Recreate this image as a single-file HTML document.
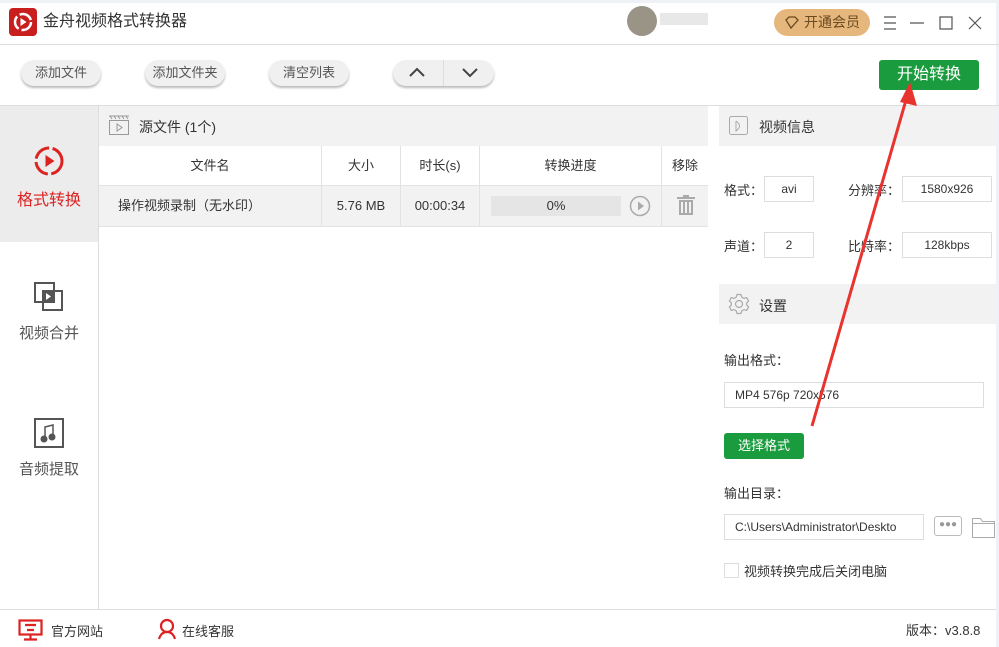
<!DOCTYPE html>
<html><head><meta charset="utf-8"><style>
*{margin:0;padding:0;box-sizing:border-box}
body{width:999px;height:647px;position:relative;background:#fff;font-family:"Liberation Sans","Noto Sans CJK SC",sans-serif;color:#333;overflow:hidden;font-size:13px}
.a{position:absolute}
.btn{position:absolute;height:26px;border-radius:13px;background:#f0f0f0;box-shadow:0 2px 2px #bbb;font-size:13px;color:#555;text-align:center;line-height:26px}
.inp{position:absolute;border:1px solid #ddd;background:#fff;font-size:12px;color:#333;line-height:24px;text-align:center}
.th{position:absolute;top:147px;height:38px;line-height:38px;text-align:center;font-size:13px;color:#333}
.td{position:absolute;top:186px;height:40px;line-height:40px;text-align:center;font-size:13px;color:#333}
</style></head><body>
<div class="a" style="left:0;top:0;width:999px;height:3px;background:#eef2f7"></div>
<div class="a" style="right:0;top:0;width:3px;height:647px;background:#eef2f7"></div>
<div class="a" style="left:9px;top:8px;width:28px;height:28px;border-radius:4px;background:#c81e1e"></div>
<svg class="a" style="left:9px;top:8px" width="28" height="28"><circle cx="14" cy="14" r="8" fill="none" stroke="#fff" stroke-width="2.5" stroke-dasharray="14 3"/><path d="M11.5 10v8l6-4z" fill="#fff"/></svg>
<div class="a" style="left:43px;top:12px;font-size:16px;line-height:20px;color:#333">金舟视频格式转换器</div>
<div class="a" style="left:627px;top:6px;width:30px;height:30px;border-radius:50%;background:#9a9486"></div>
<div class="a" style="left:660px;top:13px;width:48px;height:12px;background:#e8e8e8"></div>
<div class="a" style="left:774px;top:9px;width:96px;height:27px;border-radius:14px;background:#e5b77d;color:#6b4a1e;font-size:14px;line-height:27px;padding-left:30px">开通会员</div>
<svg class="a" style="left:783px;top:15px" width="16" height="16"><path d="M3 5l3-3h6l3 3-7 8z" fill="none" stroke="#6b4a1e" stroke-width="1.3"/></svg>
<svg class="a" style="left:880px;top:14px" width="110" height="18" stroke="#555" fill="none" stroke-width="1.2"><path d="M4 3h12M4 9h12M4 15h12M30 9h14M60 3h12v12H60zM89 3l12 12M101 3L89 15"/></svg>
<div class="a" style="left:0;top:44px;width:999px;height:1px;background:#ddd"></div>
<div class="btn" style="left:21px;top:60px;width:80px">添加文件</div>
<div class="btn" style="left:145px;top:60px;width:80px">添加文件夹</div>
<div class="btn" style="left:269px;top:60px;width:80px">清空列表</div>
<div class="btn" style="left:393px;top:60px;width:101px"></div>
<div class="a" style="left:443px;top:60px;width:1px;height:26px;background:#ddd"></div>
<svg class="a" style="left:393px;top:61px" width="101" height="24" fill="none" stroke="#444" stroke-width="2"><path d="M17 15l7-7 7 7M70 8l7 7 7-7"/></svg>
<div class="a" style="left:879px;top:60px;width:100px;height:30px;background:#1a9c3e;border-radius:3px;color:#fff;font-size:16px;text-align:center;line-height:30px">开始转换</div>
<div class="a" style="left:0;top:105px;width:999px;height:1px;background:#ddd"></div>
<div class="a" style="left:0;top:106px;width:98px;height:136px;background:#ececec"></div>
<div class="a" style="left:98px;top:106px;width:1px;height:503px;background:#ddd"></div>
<svg class="a" style="left:33px;top:145px" width="32" height="32"><circle cx="16" cy="16" r="13" fill="none" stroke="#d22" stroke-width="3" stroke-dasharray="18 3.5"/><path d="M12.5 10v12l9-6z" fill="#d22"/></svg>
<div class="a" style="left:0;top:186px;width:98px;text-align:center;font-size:16px;color:#d22">格式转换</div>
<svg class="a" style="left:33px;top:281px" width="32" height="32" fill="none" stroke="#555" stroke-width="2"><rect x="2" y="2" width="19" height="19"/><rect x="10" y="10" width="19" height="19" fill="#fff"/><rect x="10" y="10" width="11" height="11" fill="#555"/><path d="M13 12v7l5-3.5z" fill="#fff" stroke="none"/></svg>
<div class="a" style="left:0;top:322px;width:98px;text-align:center;font-size:15px;color:#555">视频合并</div>
<svg class="a" style="left:33px;top:417px" width="32" height="32" fill="none" stroke="#555" stroke-width="2"><rect x="2" y="2" width="28" height="28"/><path d="M12 22V10l8-2v12" stroke-width="1.5"/><circle cx="11" cy="22" r="2.5" fill="#555"/><circle cx="19" cy="20" r="2.5" fill="#555"/></svg>
<div class="a" style="left:0;top:458px;width:98px;text-align:center;font-size:15px;color:#555">音频提取</div>
<div class="a" style="left:99px;top:106px;width:609px;height:40px;background:#f2f2f2"></div>
<svg class="a" style="left:108px;top:114px" width="24" height="24" fill="none" stroke="#999" stroke-width="1"><rect x="1.5" y="6.5" width="19" height="14"/><path d="M1 2h20M2 2l2 3M6 2l2 3M10 2l2 3M14 2l2 3M18 2l2 3M9 10v7l5-3.5z"/></svg>
<div class="a" style="left:139px;top:117px;font-size:14px;color:#333">源文件 (1个)</div>
<div class="a" style="left:99px;top:185px;width:609px;height:41px;background:#f2f2f2"></div>
<div class="a" style="left:99px;top:185px;width:609px;height:1px;background:#e2e2e2"></div>
<div class="a" style="left:99px;top:226px;width:609px;height:1px;background:#e2e2e2"></div>
<div class="a" style="left:321px;top:146px;width:1px;height:80px;background:#e2e2e2"></div>
<div class="a" style="left:400px;top:146px;width:1px;height:80px;background:#e2e2e2"></div>
<div class="a" style="left:479px;top:146px;width:1px;height:80px;background:#e2e2e2"></div>
<div class="a" style="left:661px;top:146px;width:1px;height:80px;background:#e2e2e2"></div>
<div class="th" style="left:99px;width:222px">文件名</div>
<div class="th" style="left:322px;width:78px">大小</div>
<div class="th" style="left:401px;width:78px">时长(s)</div>
<div class="th" style="left:480px;width:181px">转换进度</div>
<div class="th" style="left:662px;width:46px">移除</div>
<div class="td" style="left:118px;text-align:left">操作视频录制（无水印）</div>
<div class="td" style="left:322px;width:78px">5.76 MB</div>
<div class="td" style="left:401px;width:78px">00:00:34</div>
<div class="a" style="left:491px;top:196px;width:130px;height:20px;background:#e5e5e5;text-align:center;line-height:20px;font-size:13px">0%</div>
<svg class="a" style="left:629px;top:195px" width="24" height="22" fill="none" stroke="#aaa" stroke-width="1.5"><circle cx="11" cy="11" r="9.5"/><path d="M9 6.5v9l6-4.5z" fill="#aaa" stroke="none"/></svg>
<svg class="a" style="left:675px;top:195px" width="22" height="22" fill="#aaa"><rect x="2" y="2" width="18" height="2"/><rect x="8" y="0" width="6" height="2"/><path d="M4 5h14v15H4z M6 7v11h2V7z M10 7v11h2V7z M14 7v11h2V7z" fill-rule="evenodd"/></svg>
<div class="a" style="left:719px;top:106px;width:277px;height:40px;background:#f2f2f2"></div>
<svg class="a" style="left:728px;top:115px" width="22" height="22" fill="none" stroke="#aaa" stroke-width="1"><rect x="1.5" y="1.5" width="18" height="18" rx="2"/><path d="M8 6v10q7-5 0-10"/></svg>
<div class="a" style="left:759px;top:117px;font-size:14px">视频信息</div>
<div class="a" style="left:724px;top:180px;font-size:13px">格式：</div>
<div class="inp" style="left:764px;top:176px;width:50px;height:26px">avi</div>
<div class="a" style="left:848px;top:180px;font-size:13px">分辨率：</div>
<div class="inp" style="left:902px;top:176px;width:90px;height:26px">1580x926</div>
<div class="a" style="left:724px;top:236px;font-size:13px">声道：</div>
<div class="inp" style="left:764px;top:232px;width:50px;height:26px">2</div>
<div class="a" style="left:848px;top:236px;font-size:13px">比特率：</div>
<div class="inp" style="left:902px;top:232px;width:90px;height:26px">128kbps</div>
<div class="a" style="left:719px;top:284px;width:277px;height:40px;background:#f2f2f2"></div>
<svg class="a" style="left:728px;top:293px" width="22" height="22" fill="none" stroke="#aaa" stroke-width="1.2"><circle cx="11" cy="11" r="3.5"/><path d="M9 1.5h4l.7 2.6 2.3 1.3 2.6-.8 2 3.4-1.9 1.9v2.2l1.9 1.9-2 3.4-2.6-.8-2.3 1.3-.7 2.6H9l-.7-2.6-2.3-1.3-2.6.8-2-3.4 1.9-1.9V9.9L1.4 8l2-3.4 2.6.8 2.3-1.3z"/></svg>
<div class="a" style="left:759px;top:296px;font-size:14px">设置</div>
<div class="a" style="left:724px;top:350px;font-size:13px">输出格式：</div>
<div class="inp" style="left:724px;top:382px;width:260px;height:26px;text-align:left;padding-left:10px">MP4 576p 720x576</div>
<div class="a" style="left:724px;top:433px;width:80px;height:26px;background:#1a9c3e;border-radius:3px;color:#fff;font-size:13px;text-align:center;line-height:26px">选择格式</div>
<div class="a" style="left:724px;top:483px;font-size:13px">输出目录：</div>
<div class="inp" style="left:724px;top:514px;width:200px;height:26px;text-align:left;padding-left:10px">C:\Users\Administrator\Deskto</div>
<div class="a" style="left:934px;top:516px;width:28px;height:20px;border:1px solid #bbb;border-radius:3px;color:#999;font-size:10px;text-align:center;line-height:16px">●●●</div>
<svg class="a" style="left:971px;top:516px" width="24" height="22" fill="none" stroke="#aaa" stroke-width="1"><path d="M1.5 2.5h8l2 3h12v16h-22z M1.5 7.5h22"/></svg>
<div class="a" style="left:724px;top:563px;width:15px;height:15px;border:1px solid #ddd"></div>
<div class="a" style="left:744px;top:561px;font-size:13px">视频转换完成后关闭电脑</div>
<div class="a" style="left:0;top:609px;width:996px;height:1px;background:#ddd"></div>
<svg class="a" style="left:18px;top:619px" width="26" height="22" fill="none" stroke="#d22" stroke-width="2.2"><rect x="1.5" y="1.5" width="22" height="14"/><path d="M7 6h11M9 11h7M12.5 16v4M6 20.5h13"/></svg>
<div class="a" style="left:51px;top:621px;font-size:13px">官方网站</div>
<svg class="a" style="left:157px;top:618px" width="20" height="22" fill="none" stroke="#d22" stroke-width="2.2"><circle cx="10" cy="8" r="6"/><path d="M2 21q2-7 8-7t8 7"/></svg>
<div class="a" style="left:182px;top:621px;font-size:13px">在线客服</div>
<div class="a" style="left:906px;top:620px;font-size:13px">版本：v3.8.8</div>
<svg class="a" style="left:0;top:0" width="999" height="647"><line x1="812" y1="426" x2="906" y2="100" stroke="#e8332e" stroke-width="3"/><path d="M910 82l7 24-17-4z" fill="#e8332e"/></svg>
</body></html>
